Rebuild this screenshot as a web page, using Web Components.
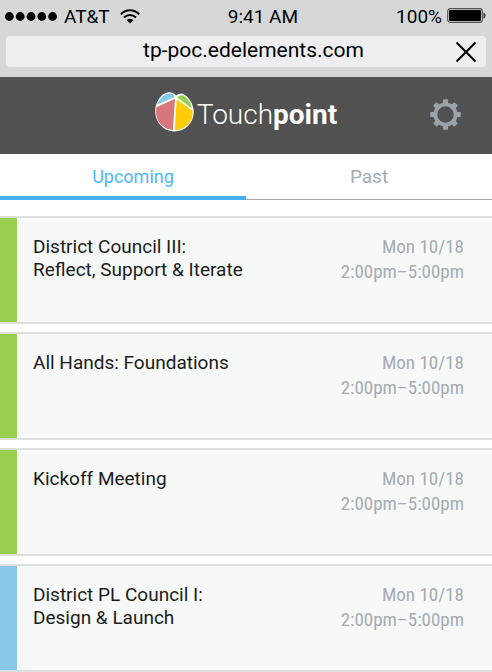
<!DOCTYPE html>
<html lang="en">
<head>
<meta charset="utf-8">
<meta name="viewport" content="width=device-width, initial-scale=1">
<title>Touchpoint</title>
<style>
  body { margin: 0; background: #fff; color: #1b1b1b; font-family: Roboto, "Liberation Sans", sans-serif; font-size: 19px; }
</style>
</head>
<body>
<tp-app></tp-app>
<script>
const define = (name, html, setup) => {
  const template = document.createElement('template');
  template.innerHTML = html;
  customElements.define(name, class extends HTMLElement {
    connectedCallback() {
      if (this.shadowRoot) return;
      this.attachShadow({ mode: 'open' }).append(template.content.cloneNode(true));
      if (setup) setup(this, this.shadowRoot);
    }
  });
};

define('status-bar', `
  <style>
    :host { display: flex; align-items: center; height: 34px; padding: 0 6px 0 5px; color: #000; font-size: 19px; line-height: 34px; }
    .left { display: flex; align-items: center; gap: 7px; }
    .time { flex: 1; padding-right: 10px; text-align: center; }
    .right { display: flex; align-items: center; gap: 5px; }
    .wifi { margin: 0 0 2px 3px; }
    .battery { margin-bottom: 4px; }
    svg { display: block; }
  </style>
  <div class="left">
    <svg width="52" height="10" viewBox="0 0 52 10" aria-hidden="true"><circle cx="4.4" cy="4.5" r="4.4"/><circle cx="15.2" cy="4.5" r="4.4"/><circle cx="26" cy="4.5" r="4.4"/><circle cx="36.8" cy="4.5" r="4.4"/><circle cx="47.6" cy="4.5" r="4.4"/></svg>
    <span>AT&amp;T</span>
    <svg class="wifi" width="20" height="15" viewBox="0 0 20 15" fill="none" stroke="#000" stroke-width="2" aria-hidden="true"><path d="M.8 5.2C6-.2 14-.2 19.200 5.200M4 8.500c3.500-3.300 8.500-3.300 12 0"/><path d="M6.700 11q3.300-2.600 6.600 0L10 14.400z" fill="#000" stroke="none"/></svg>
  </div>
  <span class="time">9:41 AM</span>
  <div class="right">
    <span>100%</span>
    <svg class="battery" width="39" height="15" viewBox="0 0 39 15" aria-hidden="true"><rect x=".7" y=".7" width="34.600" height="13.600" rx="2.500" fill="none" stroke="#555" stroke-width="1.200"/><rect x="2" y="2" width="32" height="11" rx="1"/><path d="M36.500 4.500q2 .4 2 3t-2 3z" fill="#333"/></svg>
  </div>`);

define('address-bar', `
  <style>
    :host { display: block; padding: 2px 6px 10px; }
    form { display: flex; align-items: center; height: 31px; padding: 0 9px 0 46px; border-radius: 4px; background: #eeeef0; }
    input { flex: 1; min-width: 0; height: 28px; margin: 0 0 3px; padding: 0; border: 0; outline: 0; background: none; color: #000; font: inherit; font-size: 21px; text-align: center; }
    button { display: grid; place-items: center; padding: 0; border: 0; background: none; color: #000; }
  </style>
  <form>
    <input type="text" aria-label="Address" value="tp-poc.edelements.com">
    <button type="button" aria-label="Stop loading"><svg width="22" height="22" viewBox="0 0 22 22" fill="none" stroke="currentColor" stroke-width="2" aria-hidden="true"><path d="M1.500 1.500l19 19M20.500 1.500l-19 19"/></svg></button>
  </form>`);

define('app-header', `
  <style>
    :host { display: grid; grid-template-columns: 1fr auto 1fr; align-items: center; height: 75px; padding: 0 31px 2px; background: #515151; color: #fff; }
    .brand { grid-column: 2; display: flex; align-items: center; gap: 2px; color: inherit; text-decoration: none; font-size: 28px; font-weight: 300; line-height: 36px; }
    b { font-weight: 700; }
    svg { display: block; }
    .brand svg { margin-bottom: 6px; }
    button { justify-self: end; padding: 0; border: 0; background: none; color: #9aa2ac; }
  </style>
  <a class="brand" href="#">
    <svg width="40" height="40" viewBox="0 0 40 40" aria-hidden="true">
      <path d="M1 13C3.500 5.500 8.500.3 14.500.2q4.500.3 6.500 3.300Q23.500 1.600 27 1.600C32.500 3.500 37.500 10 38.600 17.500 40 30 31 39.400 19.400 39.400 6 39.400-2.500 26.500 1 13z" fill="#fff"/>
      <path d="M2.300 12.800C4.500 6.500 9 1.600 14.500 1.500q3.500.3 5.200 3.500z" fill="#88c9e8"/>
      <path d="M22.200 5.500Q24 3 27 2.900c4.500 1.700 8.600 7 10 13.600z" fill="#92d050"/>
      <path d="M1.400 15.200L20 6.800 17.900 38C6 37.300-.6 27 1.400 15.200z" fill="#d77779"/>
      <path d="M21.700 7.200l15.800 11.600C38.500 29 31 38 19.700 38.100z" fill="#ffcd05"/>
    </svg>
    <span>Touch<b>point</b></span>
  </a>
  <button type="button" aria-label="Settings">
    <svg width="31" height="31" viewBox="0 0 32 32" aria-hidden="true">
      <g fill="currentColor">
        <rect x="13.300" y=".2" width="5.400" height="31.600" rx="1"/>
        <rect x="13.300" y=".5" width="5.400" height="31" rx="1" transform="rotate(45 16 16)"/>
        <rect x="13.300" y=".2" width="5.400" height="31.600" rx="1" transform="rotate(90 16 16)"/>
        <rect x="13.300" y=".5" width="5.400" height="31" rx="1" transform="rotate(135 16 16)"/>
        <circle cx="16" cy="16" r="12.500"/>
      </g>
      <circle cx="16" cy="16" r="8.500" fill="#515151"/>
    </svg>
  </button>`);

define('tab-bar', `
  <style>
    :host { display: block; }
    div { display: grid; grid-template-columns: 1fr 1fr; height: 46px; }
    button { padding: 0; border: 0; border-bottom: 1px solid #a4a9ae; background: none; color: #a6abb3; font: inherit; line-height: 24px; }
    button[aria-selected="true"] { padding: 3px 0 0 20px; border-bottom: 4px solid #46aff0; color: #50b8f8; font-size: 18px; }
  </style>
  <div role="tablist">
    <button type="button" role="tab" aria-selected="true">Upcoming</button>
    <button type="button" role="tab" aria-selected="false">Past</button>
  </div>`, (host, root) => {
  const tabs = root.querySelectorAll('button');
  tabs.forEach(tab => tab.addEventListener('click', () =>
    tabs.forEach(t => t.setAttribute('aria-selected', t === tab))));
});

define('event-card', `
  <style>
    :host { display: grid; grid-template-columns: 17px 1fr auto; box-sizing: border-box; min-height: 108px; border: solid #dcdedf; border-width: 2px 0; background: #f7f9f8; }
    .stripe { background: var(--stripe, #97ce4f); }
    h2 { margin: 0; padding: 17px 16px 0; font-size: 19px; font-weight: 400; line-height: 23px; }
    .when { padding: 16px 28px 0 0; color: #a6abb3; font-family: "Roboto Condensed", Roboto, "Liberation Sans", sans-serif; font-size: 19px; line-height: 25px; text-align: right; white-space: nowrap; }
    ::slotted(*) { display: block; }
  </style>
  <span class="stripe"></span>
  <h2><slot></slot></h2>
  <div class="when"><slot name="date"></slot><slot name="time"></slot></div>`);

define('tp-app', `
  <style>
    :host { display: block; }
    .chrome { background: #d6d8d7; }
    main { display: grid; gap: 8px; padding-top: 16px; }
    .blue { --stripe: #89c8e7; }
  </style>
  <div class="chrome"><status-bar></status-bar><address-bar></address-bar></div>
  <app-header></app-header>
  <tab-bar></tab-bar>
  <main>
    <event-card><span>District Council III:</span><span>Reflect, Support &amp; Iterate</span><time slot="date">Mon 10/18</time><time slot="time">2:00pm–5:00pm</time></event-card>
    <event-card><span>All Hands: Foundations</span><time slot="date">Mon 10/18</time><time slot="time">2:00pm–5:00pm</time></event-card>
    <event-card><span>Kickoff Meeting</span><time slot="date">Mon 10/18</time><time slot="time">2:00pm–5:00pm</time></event-card>
    <event-card class="blue"><span>District PL Council I:</span><span>Design &amp; Launch</span><time slot="date">Mon 10/18</time><time slot="time">2:00pm–5:00pm</time></event-card>
  </main>`);
</script>
</body>
</html>
